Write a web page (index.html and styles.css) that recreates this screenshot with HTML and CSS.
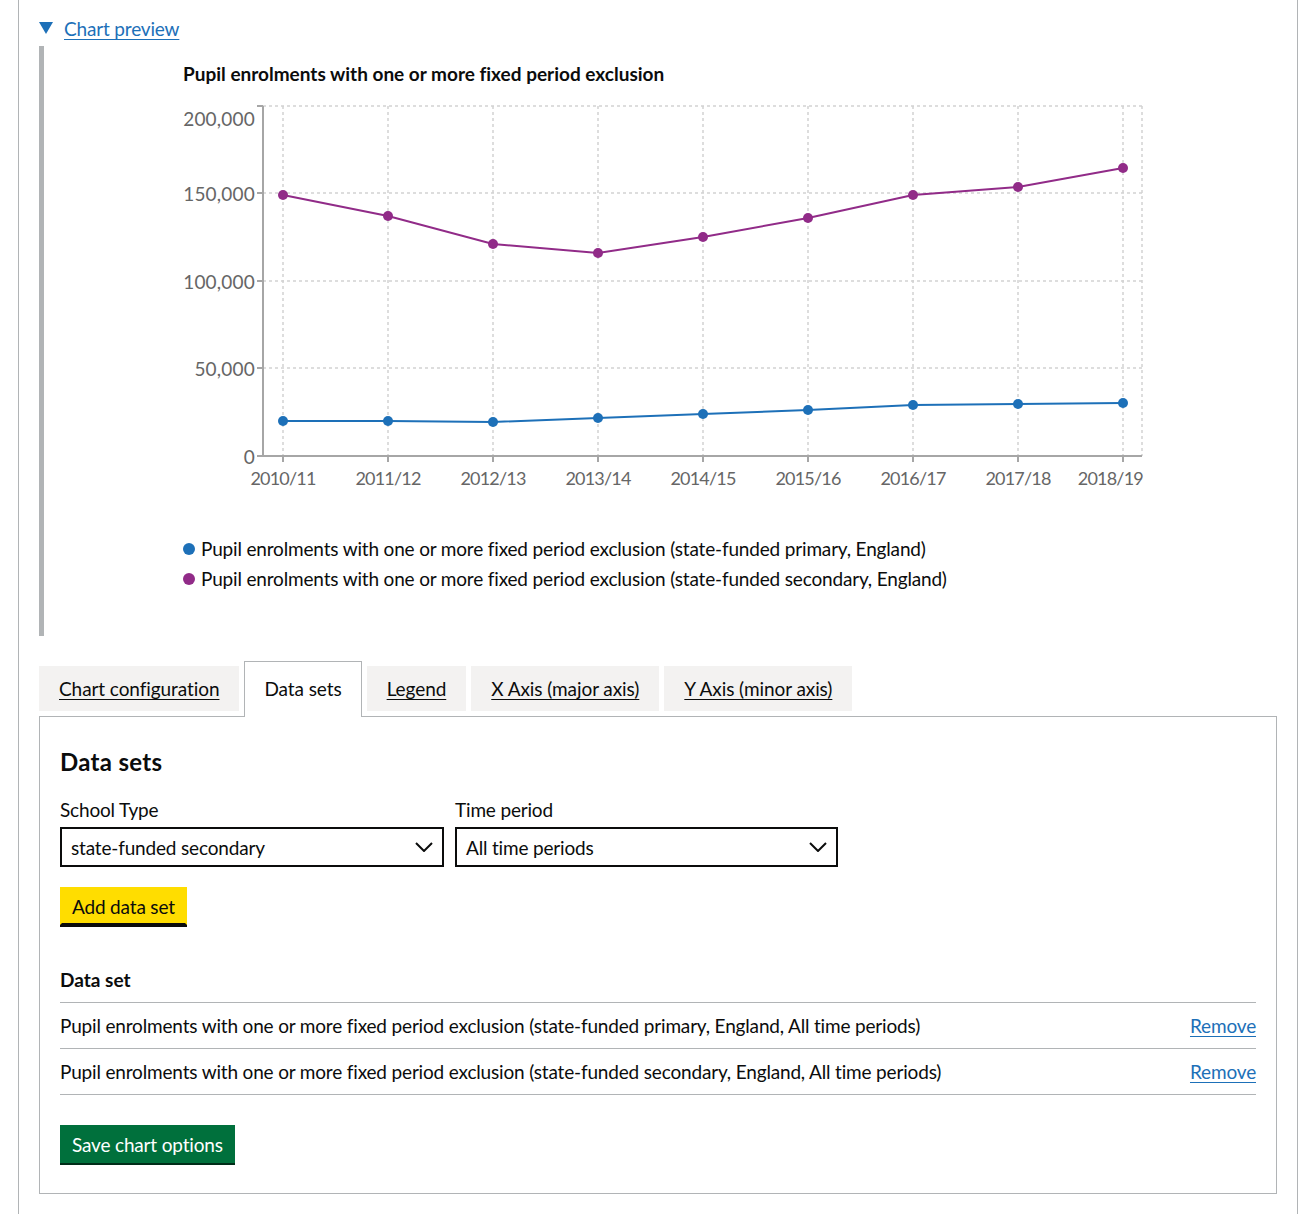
FILE: index.html
```html
<!DOCTYPE html>
<html lang="en">
<head>
<meta charset="utf-8">
<title>Chart preview</title>
<link rel="stylesheet" href="styles.css">
</head>
<body>
<div class="page">
  <details class="details" open>
    <summary class="details-summary"><span class="summary-text">Chart preview</span></summary>
    <div class="details-text">
      <h3 class="chart-title">Pupil enrolments with one or more fixed period exclusion</h3>
      <svg class="chart-svg" width="1213" height="448" viewBox="0 0 1213 448">
        <g class="grid">
          <line x1="199" y1="20" x2="1078" y2="20"/>
          <line x1="199" y1="107" x2="1078" y2="107"/>
          <line x1="199" y1="195" x2="1078" y2="195"/>
          <line x1="199" y1="282" x2="1078" y2="282"/>
          <line x1="219" y1="20" x2="219" y2="370"/>
          <line x1="324" y1="20" x2="324" y2="370"/>
          <line x1="429" y1="20" x2="429" y2="370"/>
          <line x1="534" y1="20" x2="534" y2="370"/>
          <line x1="639" y1="20" x2="639" y2="370"/>
          <line x1="744" y1="20" x2="744" y2="370"/>
          <line x1="849" y1="20" x2="849" y2="370"/>
          <line x1="954" y1="20" x2="954" y2="370"/>
          <line x1="1059" y1="20" x2="1059" y2="370"/>
          <line x1="1078" y1="20" x2="1078" y2="370"/>
        </g>
        <g class="axis">
          <line x1="199" y1="20" x2="199" y2="371"/>
          <line x1="198" y1="370" x2="1078" y2="370"/>
          <line x1="193" y1="20" x2="199" y2="20"/>
          <line x1="193" y1="107" x2="199" y2="107"/>
          <line x1="193" y1="195" x2="199" y2="195"/>
          <line x1="193" y1="282" x2="199" y2="282"/>
          <line x1="193" y1="370" x2="199" y2="370"/>
          <line x1="219" y1="370" x2="219" y2="376"/>
          <line x1="324" y1="370" x2="324" y2="376"/>
          <line x1="429" y1="370" x2="429" y2="376"/>
          <line x1="534" y1="370" x2="534" y2="376"/>
          <line x1="639" y1="370" x2="639" y2="376"/>
          <line x1="744" y1="370" x2="744" y2="376"/>
          <line x1="849" y1="370" x2="849" y2="376"/>
          <line x1="954" y1="370" x2="954" y2="376"/>
          <line x1="1059" y1="370" x2="1059" y2="376"/>
        </g>
        <g class="tick-y">
          <text x="191" y="32">200,000</text>
          <text x="191" y="107">150,000</text>
          <text x="191" y="195">100,000</text>
          <text x="191" y="282">50,000</text>
          <text x="191" y="370">0</text>
        </g>
        <g class="tick-x">
          <text x="219" y="392">2010/11</text>
          <text x="324" y="392">2011/12</text>
          <text x="429" y="392">2012/13</text>
          <text x="534" y="392">2013/14</text>
          <text x="639" y="392">2014/15</text>
          <text x="744" y="392">2015/16</text>
          <text x="849" y="392">2016/17</text>
          <text x="954" y="392">2017/18</text>
          <text class="tick-last" x="1079" y="392">2018/19</text>
        </g>
        <g class="series series-blue">
          <polyline points="219,335 324,335 429,336 534,332 639,328 744,324 849,319 954,318 1059,317"/>
          <circle cx="219" cy="335" r="5"/><circle cx="324" cy="335" r="5"/><circle cx="429" cy="336" r="5"/>
          <circle cx="534" cy="332" r="5"/><circle cx="639" cy="328" r="5"/><circle cx="744" cy="324" r="5"/>
          <circle cx="849" cy="319" r="5"/><circle cx="954" cy="318" r="5"/><circle cx="1059" cy="317" r="5"/>
        </g>
        <g class="series series-purple">
          <polyline points="219,109 324,130 429,158 534,167 639,151 744,132 849,109 954,101 1059,82"/>
          <circle cx="219" cy="109" r="5"/><circle cx="324" cy="130" r="5"/><circle cx="429" cy="158" r="5"/>
          <circle cx="534" cy="167" r="5"/><circle cx="639" cy="151" r="5"/><circle cx="744" cy="132" r="5"/>
          <circle cx="849" cy="109" r="5"/><circle cx="954" cy="101" r="5"/><circle cx="1059" cy="82" r="5"/>
        </g>
      </svg>
      <ul class="legend">
        <li class="legend-item"><span class="legend-dot dot-blue"></span>Pupil enrolments with one or more fixed period exclusion (state-funded primary, England)</li>
        <li class="legend-item"><span class="legend-dot dot-purple"></span>Pupil enrolments with one or more fixed period exclusion (state-funded secondary, England)</li>
      </ul>
    </div>
  </details>

  <div class="tabs">
    <ul class="tabs-list">
      <li class="tab"><a class="tab-link" href="#">Chart configuration</a></li>
      <li class="tab tab-selected"><a class="tab-link" href="#">Data sets</a></li>
      <li class="tab"><a class="tab-link" href="#">Legend</a></li>
      <li class="tab"><a class="tab-link" href="#">X Axis (major axis)</a></li>
      <li class="tab"><a class="tab-link" href="#">Y Axis (minor axis)</a></li>
    </ul>
    <div class="tabs-panel">
      <h2 class="heading-m">Data sets</h2>
      <div class="form-row">
        <div class="form-group">
          <label class="label">School Type</label>
          <div class="select select-a">
            <span>state-funded secondary</span>
            <svg class="chevron" width="18" height="10" viewBox="0 0 18 10"><polyline points="1,1 9,9 17,1"/></svg>
          </div>
        </div>
        <div class="form-group">
          <label class="label">Time period</label>
          <div class="select select-b">
            <span>All time periods</span>
            <svg class="chevron" width="18" height="10" viewBox="0 0 18 10"><polyline points="1,1 9,9 17,1"/></svg>
          </div>
        </div>
      </div>
      <button class="button button-focus" type="button">Add data set</button>
      <table class="table">
        <thead>
          <tr><th class="th">Data set</th><th class="th th-action"></th></tr>
        </thead>
        <tbody>
          <tr><td class="td">Pupil enrolments with one or more fixed period exclusion (state-funded primary, England, All time periods)</td><td class="td td-action"><a class="link" href="#">Remove</a></td></tr>
          <tr><td class="td">Pupil enrolments with one or more fixed period exclusion (state-funded secondary, England, All time periods)</td><td class="td td-action"><a class="link" href="#">Remove</a></td></tr>
        </tbody>
      </table>
      <button class="button button-green" type="button">Save chart options</button>
    </div>
  </div>
</div>
</body>
</html>
```

FILE: styles.css
```css
html, body {
  margin: 0;
  padding: 0;
  background: #ffffff;
}

body {
  font-family: Lato, "Liberation Sans", Arial, sans-serif;
  font-size: 19px;
  line-height: 25px;
  letter-spacing: -0.17px;
  font-variant-ligatures: none;
  color: #0b0c0c;
}

.page {
  box-sizing: border-box;
  width: 1280px;
  min-height: 1214px;
  margin-left: 18px;
  padding: 16px 20px 0;
  border-left: 1px solid #b1b4b6;
  border-right: 1px solid #b1b4b6;
}

/* details */
.details {
  margin: 0 0 30px;
}

.details-summary {
  position: relative;
  display: inline-block;
  padding-left: 25px;
  margin-bottom: 5px;
  color: #1d70b8;
  cursor: pointer;
  list-style: none;
}

.details-summary::-webkit-details-marker {
  display: none;
}

.details-summary::before {
  content: "";
  position: absolute;
  left: 0;
  top: 6px;
  width: 0;
  height: 0;
  border-style: solid;
  border-width: 12px 7px 0 7px;
  border-color: #1d70b8 transparent transparent transparent;
}

.summary-text {
  text-decoration: underline;
  text-decoration-thickness: 1px;
  text-underline-offset: 3px;
}

.details-text {
  padding: 15px 20px 15px 20px;
  border-left: 5px solid #b1b4b6;
}

.chart-title {
  margin: 0;
  padding-left: 119px;
  font-size: 19px;
  line-height: 25px;
  font-weight: 700;
  letter-spacing: 0;
}

.chart-svg {
  display: block;
}

.grid line {
  stroke: #d2d2d2;
  stroke-width: 1.5;
  stroke-dasharray: 3 3;
}

.axis line {
  stroke: #a6a6a6;
  stroke-width: 2;
}

.tick-y text,
.tick-x text {
  font-family: Lato, "Liberation Sans", Arial, sans-serif;
  fill: #666666;
  dominant-baseline: central;
}

.tick-y text {
  font-size: 19px;
  letter-spacing: 0.2px;
  text-anchor: end;
}

.tick-x text {
  font-size: 18px;
  letter-spacing: -0.8px;
  text-anchor: middle;
}

.tick-x .tick-last {
  text-anchor: end;
}

.series polyline {
  fill: none;
  stroke-width: 2;
}

.series-blue polyline { stroke: #1d70b8; }
.series-blue circle { fill: #1d70b8; }
.series-purple polyline { stroke: #912b88; }
.series-purple circle { fill: #912b88; }

.legend {
  list-style: none;
  margin: 0 0 27px;
  padding: 0 0 0 119px;
}

.legend-item {
  display: flex;
  align-items: center;
  line-height: 30px;
}

.legend-dot {
  display: inline-block;
  width: 12px;
  height: 12px;
  border-radius: 50%;
  margin-right: 6px;
  flex: none;
}

.dot-blue { background: #1d70b8; }
.dot-purple { background: #912b88; }

/* tabs */
.tabs-list {
  display: flex;
  align-items: flex-start;
  list-style: none;
  margin: 0;
  padding: 0;
}

.tab {
  margin-right: 5px;
  padding: 10px 20px;
  background: #f3f2f1;
  letter-spacing: -0.08px;
}

.tab-link {
  color: #0b0c0c;
  text-decoration: underline;
  text-decoration-thickness: 1px;
  text-underline-offset: 3px;
}

.tab-selected {
  position: relative;
  margin-top: -5px;
  margin-bottom: -1px;
  padding: 14px 19px 16px;
  border: 1px solid #b1b4b6;
  border-bottom: 0;
  background: #ffffff;
}

.tab-selected .tab-link {
  text-decoration: none;
}

.tabs-panel {
  padding: 30px 20px;
  border: 1px solid #b1b4b6;
}

.heading-m {
  margin: 0 0 20px;
  font-size: 24px;
  line-height: 30px;
  font-weight: 700;
  letter-spacing: 0.3px;
}

.form-row {
  display: flex;
  gap: 11px;
}

.label {
  display: block;
  margin-bottom: 5px;
}

.select {
  box-sizing: border-box;
  height: 40px;
  padding: 0 9px;
  border: 2px solid #0b0c0c;
  display: flex;
  align-items: center;
  justify-content: space-between;
}

.select-a { width: 384px; }
.select-b { width: 383px; }

.chevron polyline {
  fill: none;
  stroke: #0b0c0c;
  stroke-width: 2;
}

.button {
  display: block;
  margin: 20px 0 0;
  padding: 8px 10px 7px;
  border: 2px solid transparent;
  font-family: inherit;
  font-size: 19px;
  line-height: 19px;
  letter-spacing: -0.17px;
  cursor: pointer;
  border-radius: 0;
}

.button-focus {
  background: #ffdd00;
  color: #0b0c0c;
  border-bottom-color: #0b0c0c;
  box-shadow: 0 2px 0 #0b0c0c;
}

.button-green {
  margin-top: 30px;
  background: #00703c;
  color: #ffffff;
  box-shadow: 0 2px 0 #002d18;
}

.table {
  width: 100%;
  margin-top: 32px;
  border-collapse: collapse;
}

.th,
.td {
  padding: 10px 20px 10px 0;
  border-bottom: 1px solid #b1b4b6;
  text-align: left;
  vertical-align: top;
}

.th {
  font-weight: 700;
  letter-spacing: 0;
}

.th-action,
.td-action {
  padding-right: 0;
  text-align: right;
}

.link {
  color: #1d70b8;
  text-decoration: underline;
  text-decoration-thickness: 1px;
  text-underline-offset: 3px;
}
```
